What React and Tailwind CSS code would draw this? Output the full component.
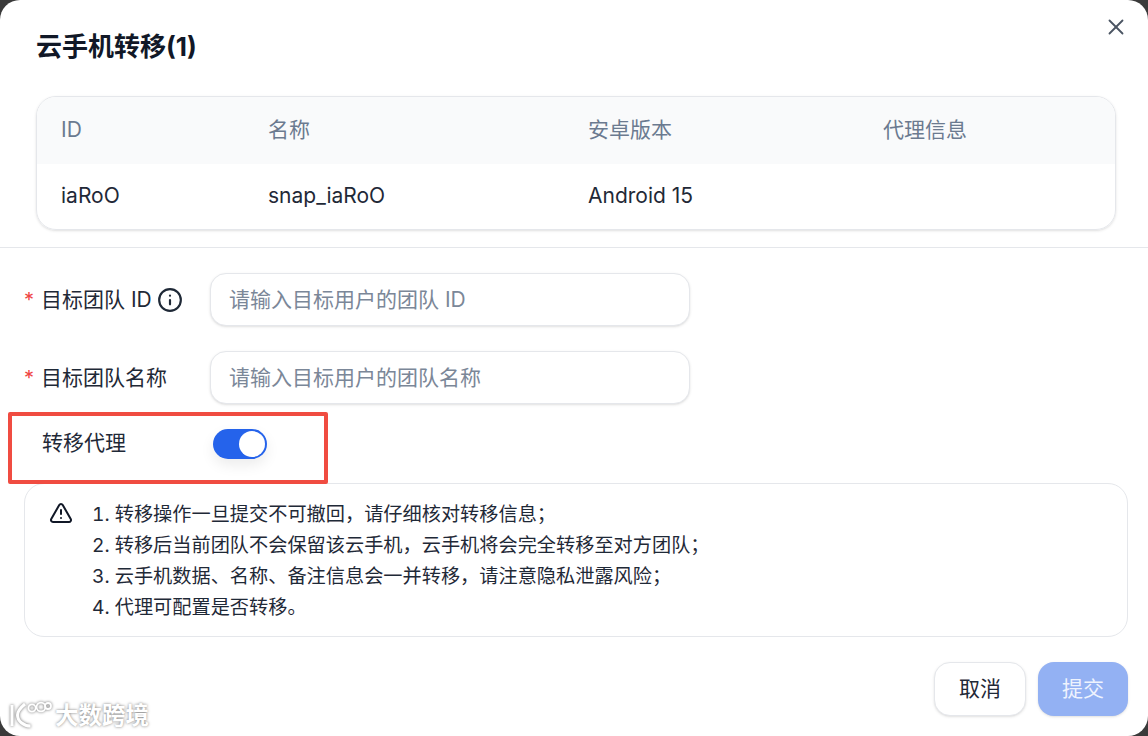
import { X, Info, TriangleAlert } from 'lucide-react';

const Field = ({ label, placeholder, children }) => (
    <div className="flex items-center h-[53px]">
        <div className="w-[186px] flex items-center text-[21px] text-[#1f2937]">
            <span className="text-[#ef4444] w-[17px] text-[20px]">*</span>
            <span>{label}</span>
            {children}
        </div>
        <div className="w-[480px] h-[53px] rounded-[16px] border border-[#e5e7eb] shadow-sm flex items-center pl-[18px] pr-[18px] text-[21px] text-[#7b8798] bg-white">
            {placeholder}
        </div>
    </div>
);

const App = () => {
    return (
        <div className="w-[1148px] h-[736px] bg-[#3a3a3a] overflow-hidden relative" style={{ fontFamily: 'Inter, "Noto Sans CJK SC", sans-serif' }}>
            <div className="w-full h-full bg-white rounded-[20px] flex flex-col">
                {/* Header */}
                <div className="pl-[36px] pr-[32px] pt-[28px] relative">
                    <h1 className="text-[26px] leading-[38px] font-bold text-[#111827]">云手机转移(1)</h1>
                    <button className="absolute right-[19px] top-[14px] text-[#4b5563]">
                        <X className="w-[26px] h-[26px]" strokeWidth={1.7} />
                    </button>
                    <div className="mt-[30px] rounded-[20px] border border-[#e5e7eb] overflow-hidden shadow-sm text-[21px]">
                        <div className="flex h-[67px] pb-[2px] items-center bg-[#f9fafb] text-[#6b7a90]">
                            <div className="w-[231px] pl-[24px]">ID</div>
                            <div className="w-[320px]">名称</div>
                            <div className="w-[295px]">安卓版本</div>
                            <div>代理信息</div>
                        </div>
                        <div className="flex h-[65px] pb-[1px] items-center text-[#1f2937]">
                            <div className="w-[231px] pl-[24px]">iaRoO</div>
                            <div className="w-[320px]">snap_iaRoO</div>
                            <div className="w-[295px]">Android 15</div>
                            <div></div>
                        </div>
                    </div>
                </div>

                <div className="mt-[17px] border-t border-[#e5e7eb]"></div>

                {/* Form */}
                <div className="pl-[24px] pr-[20px] pt-[25px] flex flex-col">
                    <Field label="目标团队 ID" placeholder="请输入目标用户的团队 ID">
                        <Info className="w-[26px] h-[26px] ml-[5px] shrink-0 text-[#1f2937]" strokeWidth={2} />
                    </Field>
                    <div className="h-[25px]"></div>
                    <Field label="目标团队名称" placeholder="请输入目标用户的团队名称" />

                    <div className="flex items-center h-[79px]">
                        <div className="w-[189px] pl-[18px] pb-[2px] text-[21px] text-[#1f2937]">转移代理</div>
                        <div className="w-[54px] h-[30px] rounded-full bg-[#2563eb] flex items-center justify-end pr-[2px] shadow-[0_6px_14px_rgba(0,0,0,0.08)]">
                            <div className="w-[26px] h-[26px] rounded-full bg-white"></div>
                        </div>
                    </div>

                    {/* Notice */}
                    <div className="w-[1104px] h-[154px] rounded-[20px] border border-[#e5e7eb] flex pl-[24px] pt-[15px] text-[#1f2937]">
                        <TriangleAlert className="w-[24px] h-[24px] mt-[2px] shrink-0 text-[#111827]" strokeWidth={2} />
                        <div className="ml-[19px] text-[19.2px] leading-[31px] tabular-nums">
                            <p>1. 转移操作一旦提交不可撤回，请仔细核对转移信息；</p>
                            <p>2. 转移后当前团队不会保留该云手机，云手机将会完全转移至对方团队；</p>
                            <p>3. 云手机数据、名称、备注信息会一并转移，请注意隐私泄露风险；</p>
                            <p>4. 代理可配置是否转移。</p>
                        </div>
                    </div>

                    {/* Actions */}
                    <div className="mt-[25px] w-[1104px] flex justify-end gap-[12px] text-[21px]">
                        <button className="w-[92px] h-[54px] rounded-[16px] border border-[#e5e7eb] bg-white shadow-sm text-[#1f2937]">取消</button>
                        <button className="w-[90px] h-[54px] rounded-[16px] bg-[#93b1f3] text-[#eef3fe] shadow-sm">提交</button>
                    </div>
                </div>
            </div>

            {/* Annotation */}
            <div className="absolute left-[8px] top-[412px] w-[320px] h-[72px] border-4 border-[#f04c41] rounded-[2px]"></div>

            {/* Watermark */}
            <div className="absolute left-[8px] top-[701px] flex items-center text-white [text-shadow:0_0_3px_#777]">
                <svg width="44" height="30" viewBox="0 0 44 30" fill="none" stroke="#fff" strokeWidth="3" style={{ filter: 'drop-shadow(0 0 1.5px #666)' }}>
                    <path d="M4 4v21" />
                    <path d="M17 3C11 8 9.500 11 9.500 14c0 6 6 11 13 11" />
                    <circle cx="24" cy="7" r="3.6" strokeWidth="1.8" />
                    <circle cx="33" cy="6" r="4.4" strokeWidth="1.8" />
                    <circle cx="40" cy="5" r="3" strokeWidth="1.8" />
                </svg>
                <span className="ml-[3px] text-[23.5px] leading-[30px] font-semibold">大数跨境</span>
            </div>
        </div>
    );
};

export default App;
